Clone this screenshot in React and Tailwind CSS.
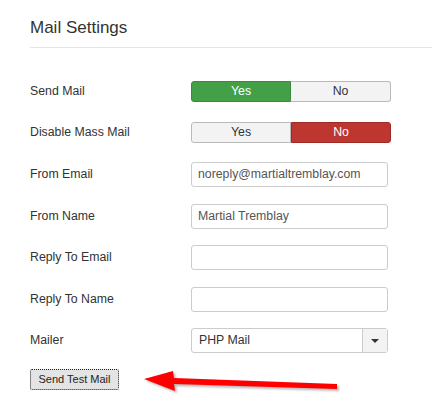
import React from "react";

const font = { fontFamily: "'Liberation Sans', Arial, sans-serif" };

const Toggle = ({ value }) => {
  const yes = value === "yes";
  return (
    <div className="flex h-[21px] w-[200px] text-[12.3px]">
      <div
        className={
          yes
            ? "flex w-[100px] items-center justify-center rounded-l-[3px] border border-[#3b8a3f] bg-[#43a047] text-white"
            : "flex w-[100px] items-center justify-center rounded-l-[3px] border border-[#b9b9b9] bg-[#f3f3f3] text-[#333]"
        }
      >
        Yes
      </div>
      <div
        className={
          yes
            ? "flex w-[100px] items-center justify-center rounded-r-[3px] border border-l-0 border-[#b9b9b9] bg-[#f3f3f3] text-[#333]"
            : "flex w-[100px] items-center justify-center rounded-r-[3px] border border-[#9e2a25] bg-[#bd362f] text-white"
        }
      >
        No
      </div>
    </div>
  );
};

const Input = ({ value }) => (
  <div className="flex h-[25px] w-[197px] items-center rounded-[3px] border border-[#cccccc] bg-white px-[6px] text-[12.3px] text-[#555]">
    {value}
  </div>
);

const Select = ({ value }) => (
  <div className="flex h-[25px] w-[197px] rounded-[3px] border border-[#cccccc] bg-white text-[12.3px] text-[#333]">
    <div className="flex flex-1 items-center px-[7px]">{value}</div>
    <div className="flex w-[25px] items-center justify-center border-l border-[#cccccc] bg-[#f3f3f3]">
      <svg width="8" height="4" viewBox="0 0 8 4">
        <path d="M0 0h8L4 4z" fill="#333" />
      </svg>
    </div>
  </div>
);

const rows = [
  { label: "Send Mail", h: "h-[41px]", el: <Toggle value="yes" /> },
  { label: "Disable Mass Mail", h: "h-[41px]", el: <Toggle value="no" /> },
  { label: "From Email", h: "h-[42px]", el: <Input value="noreply@martialtremblay.com" /> },
  { label: "From Name", h: "h-[42px]", el: <Input value="Martial Tremblay" /> },
  { label: "Reply To Email", h: "h-[41px]", el: <Input value="" /> },
  { label: "Reply To Name", h: "h-[42px]", el: <Input value="" /> },
  { label: "Mailer", h: "h-[41px]", el: <Select value="PHP Mail" /> },
];

export default function App() {
  return (
    <div className="relative h-[419px] w-[432px] overflow-hidden bg-white pl-[30px]" style={font}>
      <h2 className="border-b border-[#e5e5e5] pb-[9px] pt-[18px] text-[17px] font-normal leading-[20px] text-[#333]">
        Mail Settings
      </h2>
      <div className="mt-[23px] flex flex-col">
        {rows.map((r) => (
          <div key={r.label} className={"flex items-center " + r.h}>
            <div className="w-[161px] text-[12.3px] text-[#333]">{r.label}</div>
            {r.el}
          </div>
        ))}
      </div>
      <button className="mt-[8px] flex h-[21px] w-[89px] items-center justify-center rounded-[2px] border border-dotted border-[#222] bg-[#e4e4e4] text-[11px] text-[#222]">
        Send Test Mail
      </button>

      <svg className="absolute left-[140px] top-[366px]" width="206" height="30" viewBox="140 366 206 30">
        <defs>
          <filter id="sh" x="-10%" y="-50%" width="120%" height="200%">
            <feGaussianBlur stdDeviation="1.2" />
          </filter>
        </defs>
        <polygon
          points="146,381 175,373 176,380 339,386 339,391 176,386 177,393"
          fill="#888"
          opacity="0.6"
          filter="url(#sh)"
        />
        <polygon
          points="144,379 173,371 174,378 337,384 337,389 174,384 175,391"
          fill="#ff0000"
        />
      </svg>
    </div>
  );
}
